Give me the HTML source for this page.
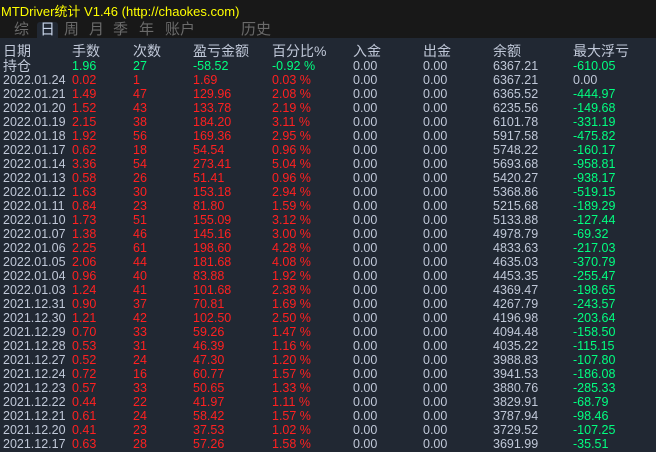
<!DOCTYPE html>
<html><head><meta charset="utf-8"><style>
body{margin:0;width:656px;height:452px;background:#212833;overflow:hidden;font-family:"Liberation Sans","Noto Sans CJK SC",sans-serif;position:relative}
.top{position:absolute;left:0;top:0;width:656px;height:38px;background:#181818}
.title{position:absolute;left:1px;top:1px;font-size:13px;color:#ffff00}
.tab{position:absolute;top:22px;font-size:15px;color:#6a6a6a;line-height:16px}
.sel{background:#212833;color:#c8d4e8;border-radius:3px 3px 0 0;padding:0 3px;height:16px}
.r{position:absolute;left:0;height:14px;font-size:12.5px;line-height:14px;white-space:nowrap;color:#c0c8d8}
.r span{position:absolute}
.h{font-size:14px}
.R{color:#ff2020}.G{color:#00ff80}
</style></head><body>
<div class="top"></div>
<div class="title">MTDriver统计 V1.46 (http://chaokes.com)</div>
<div class="tab" style="left:14px">综</div>
<div class="tab sel" style="left:37px;top:22px">日</div>
<div class="tab" style="left:64px">周</div>
<div class="tab" style="left:89px">月</div>
<div class="tab" style="left:113px">季</div>
<div class="tab" style="left:139px">年</div>
<div class="tab" style="left:165px">账户</div>
<div class="tab" style="left:241px">历史</div>
<div id="t"></div>
<script>
var c=[3,72,133,193,272,353,423,493,573];
var rows=[
["h","日期","手数","次数","盈亏金额","百分比%","入金","出金","余额","最大浮亏"],
["p","持仓","1.96","27","-58.52","-0.92 %","0.00","0.00","6367.21","-610.05"],
["2022.01.24","0.02","1","1.69","0.03 %","6367.21","0.00"],
["2022.01.21","1.49","47","129.96","2.08 %","6365.52","-444.97"],
["2022.01.20","1.52","43","133.78","2.19 %","6235.56","-149.68"],
["2022.01.19","2.15","38","184.20","3.11 %","6101.78","-331.19"],
["2022.01.18","1.92","56","169.36","2.95 %","5917.58","-475.82"],
["2022.01.17","0.62","18","54.54","0.96 %","5748.22","-160.17"],
["2022.01.14","3.36","54","273.41","5.04 %","5693.68","-958.81"],
["2022.01.13","0.58","26","51.41","0.96 %","5420.27","-938.17"],
["2022.01.12","1.63","30","153.18","2.94 %","5368.86","-519.15"],
["2022.01.11","0.84","23","81.80","1.59 %","5215.68","-189.29"],
["2022.01.10","1.73","51","155.09","3.12 %","5133.88","-127.44"],
["2022.01.07","1.38","46","145.16","3.00 %","4978.79","-69.32"],
["2022.01.06","2.25","61","198.60","4.28 %","4833.63","-217.03"],
["2022.01.05","2.06","44","181.68","4.08 %","4635.03","-370.79"],
["2022.01.04","0.96","40","83.88","1.92 %","4453.35","-255.47"],
["2022.01.03","1.24","41","101.68","2.38 %","4369.47","-198.65"],
["2021.12.31","0.90","37","70.81","1.69 %","4267.79","-243.57"],
["2021.12.30","1.21","42","102.50","2.50 %","4196.98","-203.64"],
["2021.12.29","0.70","33","59.26","1.47 %","4094.48","-158.50"],
["2021.12.28","0.53","31","46.39","1.16 %","4035.22","-115.15"],
["2021.12.27","0.52","24","47.30","1.20 %","3988.83","-107.80"],
["2021.12.24","0.72","16","60.77","1.57 %","3941.53","-186.08"],
["2021.12.23","0.57","33","50.65","1.33 %","3880.76","-285.33"],
["2021.12.22","0.44","22","41.97","1.11 %","3829.91","-68.79"],
["2021.12.21","0.61","24","58.42","1.57 %","3787.94","-98.46"],
["2021.12.20","0.41","23","37.53","1.02 %","3729.52","-107.25"],
["2021.12.17","0.63","28","57.26","1.58 %","3691.99","-35.51"]];
var h="";
rows.forEach(function(r,i){
 var y,cells,cls=[];
 if(r[0]=="h"){y=43;cells=r.slice(1);h+='<div class="r h" style="top:'+y+'px;height:16px;line-height:16px">';cls=Array(9).fill("")}
 else if(r[0]=="p"){y=58;cells=r.slice(1);h+='<div class="r h" style="top:'+y+'px;height:16px;line-height:16px">';cls=["","G","G","G","G","","","","G"]}
 else{y=73+(i-2)*14;cells=[r[0],r[1],r[2],r[3],r[4],"0.00","0.00",r[5],r[6]];h+='<div class="r" style="top:'+y+'px">';cls=["","R","R","R","R","","","",r[6]=="0.00"?"":"G"]}
 cells.forEach(function(t,j){h+='<span class="'+cls[j]+'" style="left:'+c[j]+'px;'+(r[0]=="p"&&j>0?'font-size:12.5px':'')+'">'+t+'</span>'});
 h+='</div>';
});
document.getElementById("t").innerHTML=h;
</script>
</body></html>
